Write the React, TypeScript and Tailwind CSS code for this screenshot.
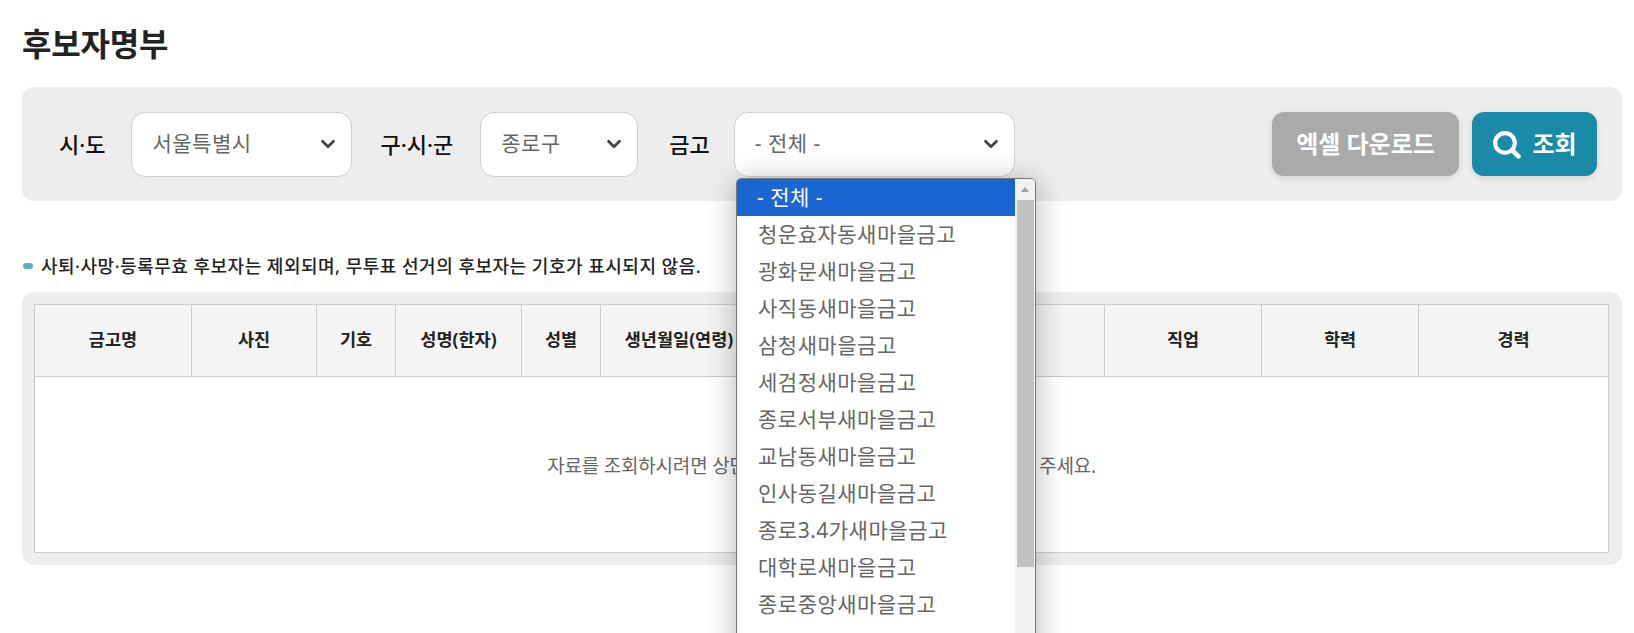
import { ChevronDown } from "lucide-react";

const columns = [
  { label: "금고명", width: "w-[157px]" },
  { label: "사진", width: "w-[125px]" },
  { label: "기호", width: "w-[79px]" },
  { label: "성명(한자)", width: "w-[126px]" },
  { label: "성별", width: "w-[79px]" },
  { label: "생년월일(연령)", width: "w-[157px]" },
  { label: "주소", width: "w-[347px]" },
  { label: "직업", width: "w-[157px]" },
  { label: "학력", width: "w-[157px]" },
  { label: "경력", width: "" },
];

const options = [
  "- 전체 -",
  "청운효자동새마을금고",
  "광화문새마을금고",
  "사직동새마을금고",
  "삼청새마을금고",
  "세검정새마을금고",
  "종로서부새마을금고",
  "교남동새마을금고",
  "인사동길새마을금고",
  "종로3.4가새마을금고",
  "대학로새마을금고",
  "종로중앙새마을금고",
];

function FakeSelect({ value, width }: { value: string; width: string }) {
  return (
    <div
      className={`flex h-[65px] items-center justify-between rounded-[14px] border border-[#cfcfcf] bg-white pl-[20px] pr-[12px] ${width}`}
    >
      <span className="pb-[1px] text-[21px] tracking-[0.5px] text-[#666]">{value}</span>
      <ChevronDown className="h-[22px] w-[22px] text-[#444]" strokeWidth={3} />
    </div>
  );
}

export default function App() {
  return (
    <div
      className="relative h-[633px] overflow-hidden bg-white px-[22px] pt-[24px] text-[#111]"
      style={{ fontFamily: '"Noto Sans", "Noto Sans CJK KR", sans-serif' }}
    >
      <h1 className="h-[40px] text-[32px] leading-[40px] font-bold tracking-[-0.2px] text-[#222]">후보자명부</h1>

      {/* Search filters */}
      <div className="mt-[23px] flex h-[114px] w-[1600px] items-center rounded-[12px] bg-[#ededed] pl-[37px] pr-[25px]">
        <span className="mr-[26px] text-[22px] font-medium">시·도</span>
        <FakeSelect value="서울특별시" width="w-[221px]" />
        <span className="ml-[28px] mr-[27px] text-[22px] font-medium">구·시·군</span>
        <FakeSelect value="종로구" width="w-[158px]" />
        <span className="ml-[31px] mr-[24px] text-[22px] font-medium">금고</span>
        <FakeSelect value="- 전체 -" width="w-[281px]" />
        <div className="ml-auto flex gap-[13px]">
          <button className="flex h-[64px] w-[187px] items-center justify-center rounded-[12px] bg-[#aaaaaa] text-[24px] font-bold text-white shadow-[0_2px_6px_rgba(0,0,0,0.12)]">
            엑셀 다운로드
          </button>
          <button className="flex h-[64px] w-[125px] items-center justify-center gap-[11px] rounded-[12px] bg-[#198aa8] text-[24px] font-bold text-white shadow-[0_2px_6px_rgba(0,0,0,0.12)]">
            <svg viewBox="0 0 28 28" className="h-[29px] w-[29px]" fill="none" stroke="white" strokeLinecap="round">
              <circle cx="12.5" cy="12.5" r="9.5" strokeWidth="4" />
              <path d="M19.5 19.5L25.5 25.5" strokeWidth="4.5" />
            </svg>
            조회
          </button>
        </div>
      </div>

      {/* Notice */}
      <p className="mt-[53px] flex h-[24px] items-center text-[18px] font-medium tracking-[0.5px] text-[#222]">
        <span className="ml-[1px] mr-[8px] h-[6px] w-[10px] rounded-full bg-[#58b5b5]" />
        사퇴·사망·등록무효 후보자는 제외되며, 무투표 선거의 후보자는 기호가 표시되지 않음.
      </p>

      {/* Result table */}
      <div className="mt-[14px] w-[1600px] rounded-[12px] bg-[#ededed] py-[12px] pl-[12px] pr-[13px]">
        <table className="w-full table-fixed border-collapse bg-white">
          <thead>
            <tr className="h-[72px] bg-[#f4f4f4]">
              {columns.map((col) => (
                <th key={col.label} className={`border border-[#cccccc] pb-[2px] text-[17.5px] font-bold text-[#222] ${col.width}`}>
                  {col.label}
                </th>
              ))}
            </tr>
          </thead>
          <tbody>
            <tr className="h-[176px]">
              <td colSpan={10} className="border border-[#cccccc] pt-[3px] text-center text-[19px] tracking-[-0.2px] text-[#666]">
                자료를 조회하시려면 상단의 조건을 선택 후 조회 버튼을 클릭해 주세요.
              </td>
            </tr>
          </tbody>
        </table>
      </div>

      {/* Open dropdown list */}
      <div className="absolute left-[736px] top-[178px] flex h-[500px] w-[300px] overflow-hidden rounded-t-[5px] border border-[#767676] bg-white shadow-[0_4px_30px_rgba(0,0,0,0.3)]">
        <ul className="w-[278px]">
          {options.map((name, i) => (
            <li
              key={name}
              className={
                i === 0
                  ? "flex h-[37px] items-center bg-[#1a66d2] pl-[20px] text-[21px] tracking-[0.5px] text-white"
                  : "flex h-[37px] items-center pl-[21px] text-[21px] tracking-[0.5px] text-[#666]"
              }
            >
              {name}
            </li>
          ))}
        </ul>
        <div className="flex w-[20px] flex-col items-center bg-[#f1f1f1]">
          <svg viewBox="0 0 10 6" className="mt-[8px] h-[5px] w-[10px]">
            <path d="M5 0L10 6H0Z" fill="#a3a3a3" />
          </svg>
          <div className="mt-[8px] h-[367px] w-[17px] bg-[#c1c1c1]" />
        </div>
      </div>
    </div>
  );
}
